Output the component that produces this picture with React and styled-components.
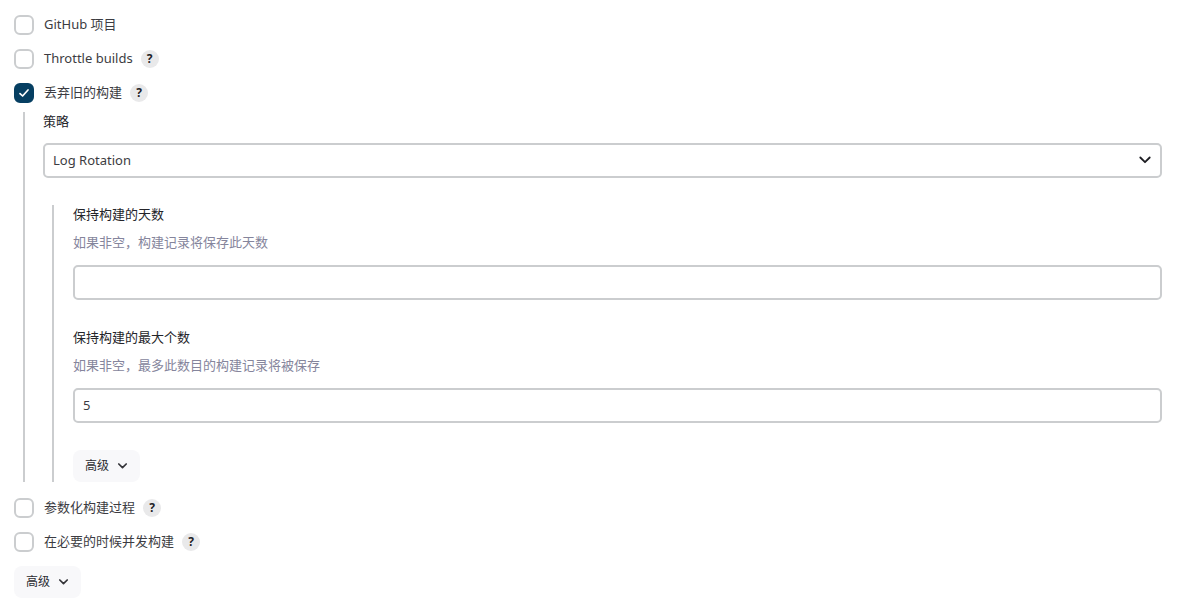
import React, { useId, useState } from "react";
import styled, { createGlobalStyle } from "styled-components";

const GlobalStyle = createGlobalStyle`
  *, *::before, *::after { box-sizing: border-box; }
  body {
    margin: 0;
    background: #fff;
    color: #3c3c42;
    font-family: "Noto Sans", "Noto Sans CJK SC", sans-serif;
    font-size: 13px;
    line-height: 18px;
  }
`;

const Form = styled.form`
  padding: 15px 38px 9px 14px;
`;

const Options = styled.div`
  display: flex;
  flex-direction: column;
  gap: 14px;
`;

const OptionRow = styled.div`
  display: flex;
  align-items: center;
  height: 20px;
`;

const OptionLabel = styled.label`
  padding-bottom: 2px;
`;

const Box = styled.span`
  display: grid;
  width: 20px;
  height: 20px;
  margin-right: 10px;
  > * { grid-area: 1 / 1; }
`;

const Checkbox = styled.input`
  appearance: none;
  width: 20px;
  height: 20px;
  margin: 0;
  border: 2px solid #cbcdcf;
  border-radius: 6px;
  background: #fff;
  &:checked {
    border-color: #063f62;
    background: #063f62;
  }
`;

const Tick = styled.svg`
  place-self: center;
  pointer-events: none;
`;

const HelpButton = styled.button`
  width: 18px;
  height: 18px;
  margin-left: 8px;
  padding: 0;
  border: 0;
  border-radius: 50%;
  background: #e9e9ea;
  color: #222226;
  font: 700 12px/18px "Noto Sans", sans-serif;
  text-align: center;
`;

const Nested = styled.div`
  border-left: 2px solid #cbcdcf;
  padding-left: ${(p) => (p.$outer ? "18px" : "19px")};
  margin: ${(p) => (p.$outer ? "9px 0 16px 9px" : "27px 0 0 9px")};
`;

const Field = styled.div`
  display: flex;
  flex-direction: column;
  & + & { margin-top: 28px; }
`;

const FieldLabel = styled.label`
  color: #242429;
`;

const Description = styled.div`
  margin-top: 10px;
  color: #85859c;
`;

const TextInput = styled.input`
  width: 100%;
  height: 35px;
  margin-top: 14px;
  padding: 0 8px 2px;
  border: 2px solid #cbcdcf;
  border-radius: 5px;
  background: #fff;
  color: #3c3c42;
  font: inherit;
`;

const SelectWrap = styled.div`
  display: grid;
  margin-top: 13px;
  > * { grid-area: 1 / 1; }
`;

const Select = styled.select`
  appearance: none;
  width: 100%;
  height: 35px;
  padding: 0 32px 2px 8px;
  border: 2px solid #cbcdcf;
  border-radius: 5px;
  background: #fff;
  color: #3c3c42;
  font: inherit;
`;

const SelectArrow = styled.svg`
  place-self: center end;
  margin: 0 11px 2px 0;
  pointer-events: none;
`;

const Actions = styled.div`
  padding-top: ${(p) => (p.$nested ? "27px" : "14px")};
`;

const AdvancedButton = styled.button`
  display: inline-flex;
  align-items: center;
  gap: 8px;
  height: 32px;
  padding: 0 12px;
  border: 0;
  border-radius: 8px;
  background: #f8f8fa;
  color: #2c2c31;
  font: inherit;
  font-size: 12px;
  vertical-align: top;
`;

function Option({ label, help, defaultChecked = false }) {
  const id = useId();
  const [checked, setChecked] = useState(defaultChecked);
  return (
    <OptionRow>
      <Box>
        <Checkbox
          id={id}
          type="checkbox"
          checked={checked}
          onChange={(e) => setChecked(e.target.checked)}
        />
        {checked && (
          <Tick width="12" height="12" viewBox="0 0 12 12" fill="none" stroke="#fff" strokeWidth="1.7" strokeLinecap="round" strokeLinejoin="round">
            <path d="M2 6.6 4.6 9 10 3" />
          </Tick>
        )}
      </Box>
      <OptionLabel htmlFor={id}>{label}</OptionLabel>
      {help && <HelpButton type="button">?</HelpButton>}
    </OptionRow>
  );
}

function TextField({ label, description, defaultValue }) {
  const id = useId();
  return (
    <Field>
      <FieldLabel htmlFor={id}>{label}</FieldLabel>
      <Description>{description}</Description>
      <TextInput id={id} type="text" defaultValue={defaultValue} />
    </Field>
  );
}

function Advanced() {
  return (
    <AdvancedButton type="button">
      高级
      <svg width="11" height="8" viewBox="0 0 11 8" fill="none" stroke="#333338" strokeWidth="1.7" strokeLinecap="round" strokeLinejoin="round">
        <path d="M1.8 2 5.5 5.7 9.2 2" />
      </svg>
    </AdvancedButton>
  );
}

export default function App() {
  return (
    <>
      <GlobalStyle />
      <Form>
        <Options>
          <Option label="GitHub 项目" />
          <Option label="Throttle builds" help />
          <Option label="丢弃旧的构建" help defaultChecked />
        </Options>
        <Nested $outer>
          <Field>
            <FieldLabel htmlFor="strategy">策略</FieldLabel>
            <SelectWrap>
              <Select id="strategy">
                <option>Log Rotation</option>
              </Select>
              <SelectArrow width="12" height="8" viewBox="0 0 12 8" fill="none" stroke="#1d1d22" strokeWidth="1.8" strokeLinecap="round" strokeLinejoin="round">
                <path d="M1.3 1.5 6 6.2 10.7 1.5" />
              </SelectArrow>
            </SelectWrap>
          </Field>
          <Nested>
            <TextField label="保持构建的天数" description="如果非空，构建记录将保存此天数" defaultValue="" />
            <TextField label="保持构建的最大个数" description="如果非空，最多此数目的构建记录将被保存" defaultValue="5" />
            <Actions $nested>
              <Advanced />
            </Actions>
          </Nested>
        </Nested>
        <Options>
          <Option label="参数化构建过程" help />
          <Option label="在必要的时候并发构建" help />
        </Options>
        <Actions>
          <Advanced />
        </Actions>
      </Form>
    </>
  );
}
